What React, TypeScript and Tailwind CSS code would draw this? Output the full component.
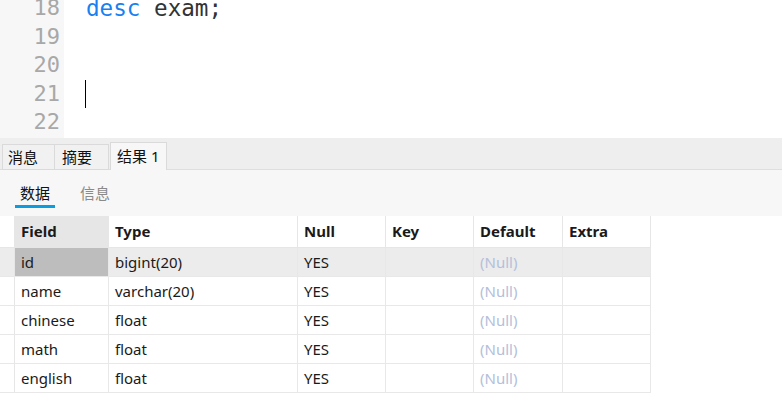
const lines = [
  { n: 18, code: true },
  { n: 19 },
  { n: 20 },
  { n: 21, cursor: true },
  { n: 22 },
];

const cols = [
  { name: "Field", w: "w-[94px]" },
  { name: "Type", w: "w-[189px]" },
  { name: "Null", w: "w-[88px]" },
  { name: "Key", w: "w-[88px]" },
  { name: "Default", w: "w-[89px]" },
  { name: "Extra", w: "w-[88px]" },
];

const rows = [
  ["id", "bigint(20)"],
  ["name", "varchar(20)"],
  ["chinese", "float"],
  ["math", "float"],
  ["english", "float"],
];

const ui = { fontFamily: '"Noto Sans", "Noto Sans CJK SC", sans-serif' };
const mono = { fontFamily: '"DejaVu Sans Mono", "Liberation Mono", monospace' };

const App = () => {
  return (
    <div className="h-[407px] w-[782px] overflow-hidden bg-white" style={ui}>
      {/* editor */}
      <div className="flex h-[138px] overflow-hidden bg-white">
        <div
          className="-mt-[6px] w-[64px] shrink-0 bg-[#f7f7f7] pr-[4px] text-right text-[22px] leading-[28.5px] text-[#a8a8a8]"
          style={mono}
        >
          {lines.map((l) => (
            <div key={l.n}>{l.n}</div>
          ))}
        </div>
        <div className="-mt-[6px] pl-[22px] text-[22.6px] leading-[28.5px] text-[#333]" style={mono}>
          {lines.map((l) => (
            <div key={l.n} className="flex h-[28.5px] items-center">
              {l.code && (
                <span>
                  <span className="text-[#1a7ff0]">desc</span> exam;
                </span>
              )}
              {l.cursor && <span className="-ml-[1px] h-[28px] w-px bg-black" />}
            </div>
          ))}
        </div>
      </div>

      {/* result tabs */}
      <div className="flex h-[32px] items-end border-b border-[#dedede] bg-[#eeeeee] pl-[2px] text-[15px] text-[#111]">
        <div className="-mb-px flex h-[26px] w-[53px] items-center border border-[#dadada] bg-[#f1f1f1] pl-[5px]">
          消息
        </div>
        <div className="-mb-px flex h-[26px] w-[54px] items-center border border-l-0 border-[#dadada] bg-[#f1f1f1] pl-[7px]">
          摘要
        </div>
        <div className="-mb-px ml-px flex h-[28px] w-[57px] items-center border border-b-0 border-[#dadada] bg-[#f7f7f7] pl-[6px]">
          结果 1
        </div>
      </div>

      {/* sub tabs */}
      <div className="flex h-[46px] gap-[25px] bg-[#f7f7f7] pl-[15px] pt-[12px] text-[15px]">
        <div className="flex flex-col items-center">
          <span className="px-[5px] leading-[22px] text-[#111]">数据</span>
          <span className="mt-[1px] h-[3px] w-[40px] bg-[#0b9de0]" />
        </div>
        <span className="leading-[22px] text-[#8a8a8a]">信息</span>
      </div>

      {/* table */}
      <div className="w-[651px] text-[15px] text-[#1a1a1a]">
        <div className="flex h-[32px] border-b border-[#e6e6e6]">
          <div className="w-[15px] border-r border-[#e6e6e6]" />
          {cols.map((c, i) => (
            <div
              key={c.name}
              className={`${c.w} flex items-center border-r border-[#e6e6e6] px-[6px] font-bold ${
                i === 0 ? "bg-[#e6e6e6]" : ""
              }`}
            >
              {c.name}
            </div>
          ))}
        </div>
        {rows.map((r, ri) => (
          <div
            key={r[0]}
            className={`flex h-[29px] border-b border-[#e8e8e8] ${ri === 0 ? "bg-[#ececec]" : ""}`}
          >
            <div className="w-[15px] border-r border-[#e6e6e6]" />
            {cols.map((c, i) => {
              let val = "";
              let cls = "";
              if (i === 0) val = r[0];
              if (i === 1) val = r[1];
              if (i === 2) val = "YES";
              if (i === 4) {
                val = "(Null)";
                cls = "text-[#b4c0da]";
              }
              return (
                <div
                  key={c.name}
                  className={`${c.w} flex items-center border-r border-[#e8e8e8] px-[6px] ${cls} ${
                    ri === 0 && i === 0 ? "bg-[#bdbdbd]" : ""
                  }`}
                >
                  {val}
                </div>
              );
            })}
          </div>
        ))}
      </div>
    </div>
  );
};

export default App;
